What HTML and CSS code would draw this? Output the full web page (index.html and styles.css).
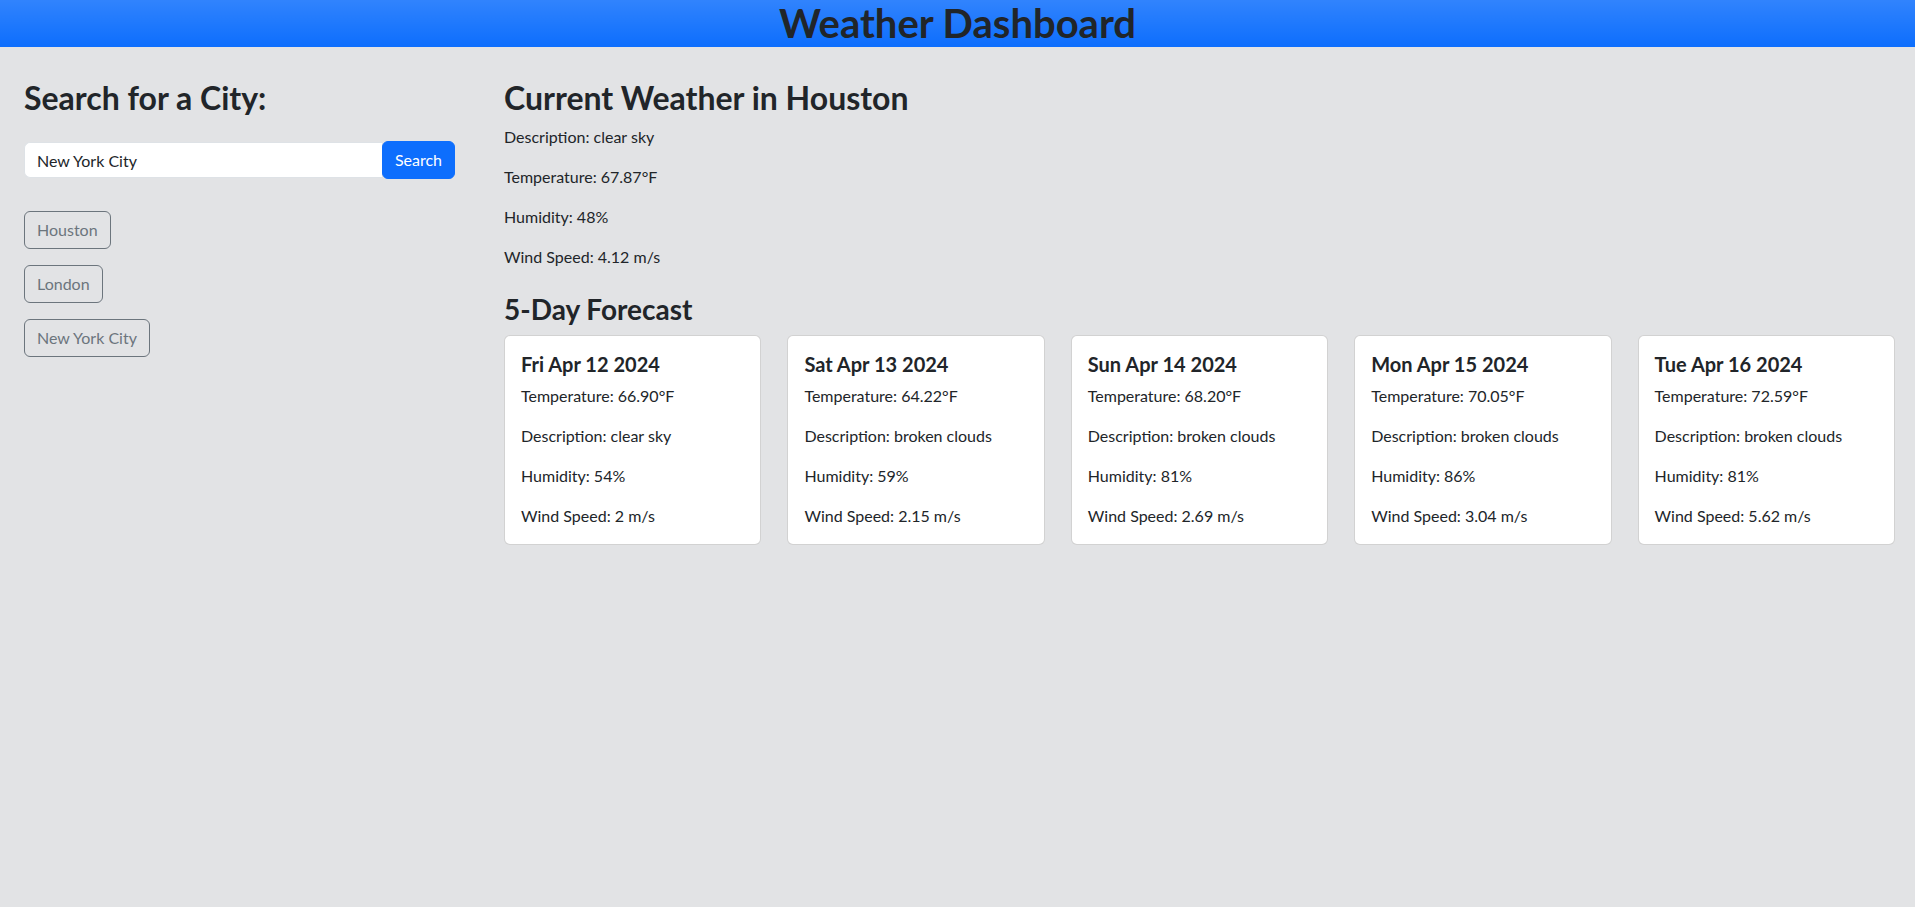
FILE: index.html
```html
<!DOCTYPE html>
<html lang="en">
<head>
<meta charset="utf-8">
<title>Weather Dashboard</title>
<link rel="stylesheet" href="styles.css">
</head>
<body>
<header class="topbar">
  <h1 class="topbar-title">Weather Dashboard</h1>
</header>
<main class="layout">
  <aside class="sidebar">
    <h2 class="section-title">Search for a City:</h2>
    <form class="search-row">
      <input class="search-input" type="text" value="New York City">
      <button class="btn-primary" type="button">Search</button>
    </form>
    <div class="history">
      <button class="btn-outline" type="button">Houston</button>
      <button class="btn-outline" type="button">London</button>
      <button class="btn-outline" type="button">New York City</button>
    </div>
  </aside>
  <section class="content">
    <h2 class="section-title">Current Weather in Houston</h2>
    <p class="stat">Description: clear sky</p>
    <p class="stat">Temperature: 67.87°F</p>
    <p class="stat">Humidity: 48%</p>
    <p class="stat">Wind Speed: 4.12 m/s</p>
    <h3 class="forecast-title">5-Day Forecast</h3>
    <div class="forecast">
      <div class="card">
        <h5 class="card-title">Fri Apr 12 2024</h5>
        <p class="stat">Temperature: 66.90°F</p>
        <p class="stat">Description: clear sky</p>
        <p class="stat">Humidity: 54%</p>
        <p class="stat">Wind Speed: 2 m/s</p>
      </div>
      <div class="card">
        <h5 class="card-title">Sat Apr 13 2024</h5>
        <p class="stat">Temperature: 64.22°F</p>
        <p class="stat">Description: broken clouds</p>
        <p class="stat">Humidity: 59%</p>
        <p class="stat">Wind Speed: 2.15 m/s</p>
      </div>
      <div class="card">
        <h5 class="card-title">Sun Apr 14 2024</h5>
        <p class="stat">Temperature: 68.20°F</p>
        <p class="stat">Description: broken clouds</p>
        <p class="stat">Humidity: 81%</p>
        <p class="stat">Wind Speed: 2.69 m/s</p>
      </div>
      <div class="card">
        <h5 class="card-title">Mon Apr 15 2024</h5>
        <p class="stat">Temperature: 70.05°F</p>
        <p class="stat">Description: broken clouds</p>
        <p class="stat">Humidity: 86%</p>
        <p class="stat">Wind Speed: 3.04 m/s</p>
      </div>
      <div class="card">
        <h5 class="card-title">Tue Apr 16 2024</h5>
        <p class="stat">Temperature: 72.59°F</p>
        <p class="stat">Description: broken clouds</p>
        <p class="stat">Humidity: 81%</p>
        <p class="stat">Wind Speed: 5.62 m/s</p>
      </div>
    </div>
  </section>
</main>
</body>
</html>
```
FILE: styles.css
```css
* { box-sizing: border-box; }

body {
  margin: 0;
  background: #e2e3e5;
  color: #212529;
  font-family: Lato, "Liberation Sans", sans-serif;
  font-size: 16px;
  line-height: 1.5;
}

.topbar {
  height: 47px;
  background-color: #0d6efd;
  background-image: linear-gradient(180deg, rgba(255,255,255,.15), rgba(255,255,255,0));
  text-align: center;
}

.topbar-title {
  margin: 0;
  font-size: 40px;
  font-weight: 700;
  line-height: 47px;
  color: #212529;
}

.layout {
  display: flex;
  align-items: flex-start;
  padding: 32px 20px 0 24px;
}

.sidebar {
  width: 431px;
  flex: none;
  margin-right: 49px;
}

.section-title {
  margin: 0 0 8px;
  font-size: 32px;
  font-weight: 700;
  line-height: 1.2;
}

.search-row {
  display: flex;
  align-items: center;
  margin: 24px 0 0;
}

.search-input {
  flex: 1;
  min-width: 0;
  height: 36px;
  padding: 6px 12px;
  border: 1px solid #dee2e6;
  border-right: none;
  border-radius: 6px 0 0 6px;
  background: #fff;
  font: inherit;
  color: #212529;
  outline: none;
}

.btn-primary {
  height: 38px;
  padding: 6px 12px;
  border: 1px solid #0d6efd;
  border-radius: 6px;
  background: #0d6efd;
  color: #fff;
  font: inherit;
  line-height: 24px;
}

.history {
  display: flex;
  flex-direction: column;
  align-items: flex-start;
  gap: 16px;
  margin-top: 32px;
}

.btn-outline {
  height: 38px;
  padding: 6px 12px;
  border: 1px solid #6c757d;
  border-radius: 6px;
  background: transparent;
  color: #6c757d;
  font: inherit;
  line-height: 24px;
}

.content {
  flex: 1;
  min-width: 0;
}

.stat {
  margin: 0 0 16px;
}

.forecast-title {
  margin: 24px 0 8px;
  font-size: 28px;
  font-weight: 700;
  line-height: 1.2;
}

.forecast {
  display: grid;
  grid-template-columns: repeat(5, 1fr);
  gap: 26px;
}

.card {
  background: #fff;
  border: 1px solid rgba(0,0,0,.175);
  border-radius: 6px;
  padding: 16px;
}

.card-title {
  margin: 0 0 8px;
  font-size: 20px;
  font-weight: 700;
  line-height: 1.2;
}

.card .stat:last-child {
  margin-bottom: 0;
}
```
